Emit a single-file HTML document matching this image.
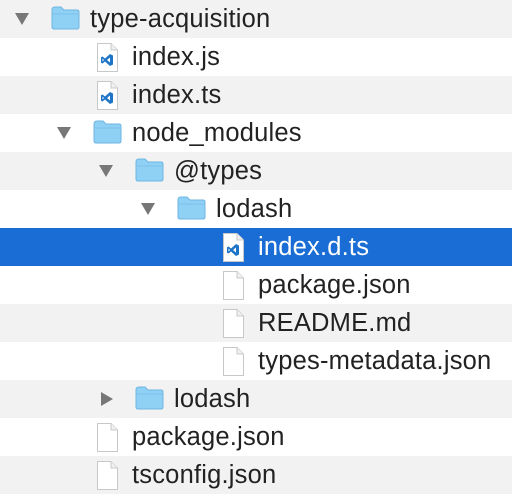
<!DOCTYPE html>
<html><head><style>
body{margin:0;width:512px;height:496px;overflow:hidden;background:#fff;font-family:"Liberation Sans",Arial,sans-serif;}
.r{position:absolute;left:0;width:512px;height:38px;}
.g{background:#f2f2f2}
.sel{background:#1a6dd4;color:#fff}
.t{position:absolute;top:4px;font-size:25.5px;line-height:30px;letter-spacing:0.2px;color:#222;white-space:nowrap}
.sel .t{color:#fff}
.tri{position:absolute;top:13px}
.ic{position:absolute}
</style></head><body>
<svg width="0" height="0" style="position:absolute"><defs>
<g id="fold"><path d="M1 4 Q1 1 4 1 H10 L13 4 H26 Q28 4 28 6 V21 Q28 23 26 23 H3 Q1 23 1 21 Z" fill="#8fd0f5" stroke="#6fb6e3" stroke-width="1"/><path d="M1 8 H28" stroke="#7cc0ea"/></g>
<g id="file"><path d="M1.5 1.5 H15 L21.5 8 V29.5 H1.5 Z" fill="#fff" stroke="#c8c8c8"/><path d="M15 1.5 V8 H21.5" fill="#f0f0f0" stroke="#c8c8c8"/></g>
<g id="vs"><path d="M14 12 L17 13.5 V22.5 L14 24 L9 19.5 L6.5 21.5 L5 20.7 V15.3 L6.5 14.5 L9 16.5 Z M14 15.5 L11 18 L14 20.5 Z M6.5 16.5 V19.5 L8 18 Z" fill="#1e74c6"/></g>
<g id="down"><path d="M0 0 H14 L7 12 Z" fill="#777"/></g>
<g id="right"><path d="M0 0 L12 7 L0 14 Z" fill="#777"/></g>
</defs></svg>

<div class="r g" style="top:0"><svg class="tri" style="left:15px" width="14" height="12"><use href="#down"/></svg><svg class="ic" style="left:51px;top:6px" width="30" height="25"><use href="#fold"/></svg><span class="t" style="left:90px">type-acquisition</span></div>
<div class="r" style="top:38px"><svg class="ic" style="left:96px;top:4px" width="24" height="31"><use href="#file"/><use href="#vs"/></svg><span class="t" style="left:132px">index.js</span></div>
<div class="r g" style="top:76px"><svg class="ic" style="left:96px;top:4px" width="24" height="31"><use href="#file"/><use href="#vs"/></svg><span class="t" style="left:132px">index.ts</span></div>
<div class="r" style="top:114px"><svg class="tri" style="left:57px" width="14" height="12"><use href="#down"/></svg><svg class="ic" style="left:93px;top:6px" width="30" height="25"><use href="#fold"/></svg><span class="t" style="left:132px">node_modules</span></div>
<div class="r g" style="top:152px"><svg class="tri" style="left:99px" width="14" height="12"><use href="#down"/></svg><svg class="ic" style="left:135px;top:6px" width="30" height="25"><use href="#fold"/></svg><span class="t" style="left:174px">@types</span></div>
<div class="r" style="top:190px"><svg class="tri" style="left:141px" width="14" height="12"><use href="#down"/></svg><svg class="ic" style="left:177px;top:6px" width="30" height="25"><use href="#fold"/></svg><span class="t" style="left:216px">lodash</span></div>
<div class="r sel" style="top:228px"><svg class="ic" style="left:222px;top:4px" width="24" height="31"><use href="#file"/><use href="#vs"/></svg><span class="t" style="left:258px">index.d.ts</span></div>
<div class="r" style="top:266px"><svg class="ic" style="left:222px;top:4px" width="24" height="31"><use href="#file"/></svg><span class="t" style="left:258px">package.json</span></div>
<div class="r g" style="top:304px"><svg class="ic" style="left:222px;top:4px" width="24" height="31"><use href="#file"/></svg><span class="t" style="left:258px">README.md</span></div>
<div class="r" style="top:342px"><svg class="ic" style="left:222px;top:4px" width="24" height="31"><use href="#file"/></svg><span class="t" style="left:258px">types-metadata.json</span></div>
<div class="r g" style="top:380px"><svg class="tri" style="left:101px;top:12px" width="12" height="14"><use href="#right"/></svg><svg class="ic" style="left:135px;top:6px" width="30" height="25"><use href="#fold"/></svg><span class="t" style="left:174px">lodash</span></div>
<div class="r" style="top:418px"><svg class="ic" style="left:96px;top:4px" width="24" height="31"><use href="#file"/></svg><span class="t" style="left:132px">package.json</span></div>
<div class="r g" style="top:456px"><svg class="ic" style="left:96px;top:4px" width="24" height="31"><use href="#file"/></svg><span class="t" style="left:132px">tsconfig.json</span></div>
</body></html>
